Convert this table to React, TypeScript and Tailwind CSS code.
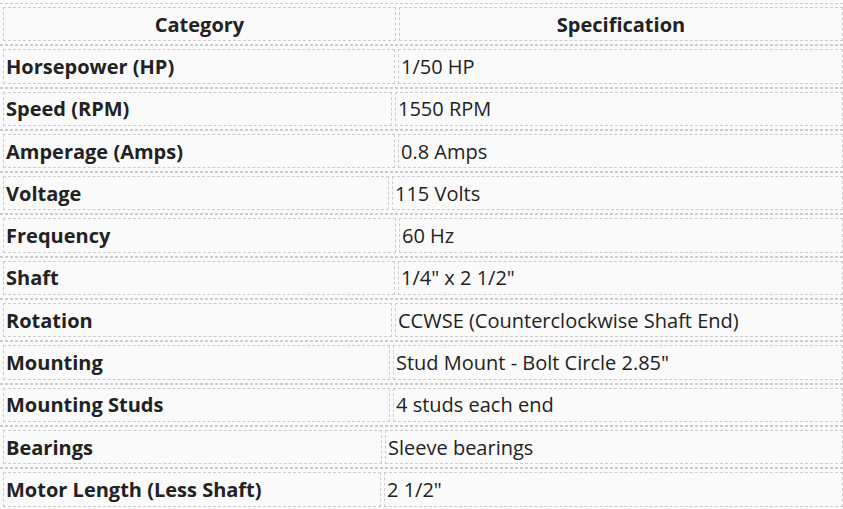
import React from "react";

const rows: [string, string, number][] = [
  ["Horsepower (HP)", "1/50 HP", 392],
  ["Speed (RPM)", "1550 RPM", 389],
  ["Amperage (Amps)", "0.8 Amps", 392],
  ["Voltage", "115 Volts", 386],
  ["Frequency", "60 Hz", 393],
  ["Shaft", "1/4\" x 2 1/2\"", 392],
  ["Rotation", "CCWSE (Counterclockwise Shaft End)", 389],
  ["Mounting", "Stud Mount - Bolt Circle 2.85\"", 387],
  ["Mounting Studs", "4 studs each end", 387],
  ["Bearings", "Sleeve bearings", 379],
  ["Motor Length (Less Shaft)", "2 1/2\"", 378],
];

function Row({ a, b, w, head }: { a: string; b: string; w: number; head?: boolean }) {
  return (
    <div className="flex gap-[3px] border-y border-dashed border-[#cccccc] pl-[3px] py-[3px]">
      <div
        className={`h-[34.3px] shrink-0 border border-dashed border-[#cccccc] flex items-center px-[2px] pt-[1px] font-bold whitespace-nowrap ${head ? "justify-center" : ""}`}
        style={{ width: w }}
      >
        {a}
      </div>
      <div
        className={`h-[34.3px] flex-1 border border-dashed border-[#cccccc] flex items-center px-[2px] pt-[1px] whitespace-nowrap ${head ? "justify-center font-bold" : ""}`}
      >
        {b}
      </div>
    </div>
  );
}

export default function App() {
  return (
    <div
      className="w-[843px] h-[509px] overflow-hidden bg-[#fafafa] pt-[3px] text-[20px] text-[#222222]"
      style={{ fontFamily: '"Open Sans", "Noto Sans", sans-serif' }}
    >
      <Row a="Category" b="Specification" w={393} head />
      {rows.map(([a, b, w]) => (
        <Row key={a} a={a} b={b} w={w} />
      ))}
    </div>
  );
}
